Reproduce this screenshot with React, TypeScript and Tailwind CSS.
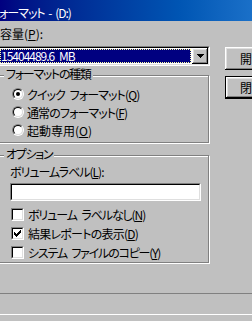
import { ReactNode } from 'react'

/* Win98 uslubidagi "Format" dialogi (chap tomoni kesilgan) */

const Key = ({ children }: { children: ReactNode }) => (
	<span className="underline underline-offset-[1px]">{children}</span>
)

const Radio = ({ checked }: { checked?: boolean }) => (
	<span className="block h-[12px] w-[12px] shrink-0 rounded-full border border-t-[#808080] border-l-[#808080] border-b-white border-r-white">
		<span className="flex h-full w-full items-center justify-center rounded-full border border-t-black border-l-black border-b-[#dfdfdf] border-r-[#dfdfdf] bg-white">
			{checked && <span className="block h-[4px] w-[4px] rounded-full bg-black" />}
		</span>
	</span>
)

const Check = ({ checked }: { checked?: boolean }) => (
	<span className="flex h-[13px] w-[13px] shrink-0 border border-t-[#808080] border-l-[#808080] border-b-white border-r-white">
		<span className="flex flex-1 items-center justify-center border border-t-black border-l-black border-b-[#dfdfdf] border-r-[#dfdfdf] bg-white">
			{checked && (
				<svg width="7" height="7" viewBox="0 0 7 7" shapeRendering="crispEdges">
					<path
						d="M0 2h1v3h-1z M1 3h1v3h-1z M2 4h1v3h-1z M3 3h1v3h-1z M4 2h1v3h-1z M5 1h1v3h-1z M6 0h1v3h-1z"
						fill="#000"
					/>
				</svg>
			)}
		</span>
	</span>
)

const Group = ({
	label,
	className,
	children,
}: {
	label: ReactNode
	className: string
	children: ReactNode
}) => (
	<div
		className={`relative w-[212px] border border-[#808080] shadow-[inset_1px_1px_0_#fff,1px_1px_0_#fff] ${className}`}
	>
		<span className="absolute left-[6px] top-[-9px] bg-[#c0c0c0] px-[2px] leading-[14px] tracking-[-1.3px]">
			{label}
		</span>
		{children}
	</div>
)

const raised =
	'shadow-[inset_-1px_-1px_0_#000,inset_1px_1px_0_#fff,inset_-2px_-2px_0_#808080,inset_2px_2px_0_#dfdfdf]'

export default function App() {
	return (
		<div className="h-[321px] w-[252px] overflow-hidden bg-[#c0c0c0] font-['Noto_Sans_CJK_JP','Noto_Sans_CJK_SC',sans-serif] text-[12px] leading-[15px] text-black [font-feature-settings:'palt'] [word-spacing:3px]">
			{/* Title */}
			<div className="h-[21px] overflow-hidden bg-gradient-to-r from-[#000080] to-[#1a70c8] pt-[6px] leading-[14px] whitespace-nowrap text-white">
				<span className="-ml-[10px] tracking-[-1px] [word-spacing:2px]">フォーマット - (D:)</span>
			</div>

			<div className="flex">
				{/* Left column */}
				<div className="-ml-[3px] flex w-[213px] shrink-0 flex-col pt-[5px]">
					<div className="pl-[3px]">
						容量(<Key>P</Key>):
					</div>

					{/* Combo */}
					<div className="mt-[5px] flex h-[20px] w-[213px] border border-t-[#808080] border-l-[#808080] border-b-white border-r-white">
						<div className="flex flex-1 border border-t-black border-l-black border-b-[#dfdfdf] border-r-[#dfdfdf] bg-white pl-[1px]">
							<div className="my-[1px] flex flex-1 items-center bg-[#000080] pl-[1px] leading-[14px] tracking-[-1px] text-white outline-1 -outline-offset-1 outline-dotted outline-[#ffffa0]">
								15404489.6 MB
							</div>
							<div className={`ml-[1px] flex h-[16px] w-[16px] items-center justify-center bg-[#c0c0c0] ${raised}`}>
								<svg width="7" height="4" viewBox="0 0 7 4" shapeRendering="crispEdges">
									<path d="M0 0h7L3.5 4z" fill="#000" />
								</svg>
							</div>
						</div>
					</div>

					<Group label="フォーマットの種類" className="mt-[9px] pl-[14px] pt-[9px] pb-[3px]">
						<div className="flex h-[18px] items-center gap-[3px]">
							<Radio checked />
							<span className="whitespace-nowrap tracking-[-0.9px]">
								クイック フォーマット(<Key>Q</Key>)
							</span>
						</div>
						<div className="flex h-[18px] items-center gap-[3px]">
							<Radio />
							<span className="whitespace-nowrap tracking-[-0.9px]">
								通常のフォーマット(<Key>F</Key>)
							</span>
						</div>
						<div className="flex h-[18px] items-center gap-[3px]">
							<Radio />
							<span className="whitespace-nowrap">
								起動専用(<Key>O</Key>)
							</span>
						</div>
					</Group>

					<Group label="オプション" className="mt-[12px] pl-[12px] pt-[9px]">
						<div className="leading-[14px] whitespace-nowrap tracking-[-1px]">
							ボリュームラベル(<Key>L</Key>):
						</div>
						<div className="mt-[4px] flex h-[18px] w-[191px] border border-t-[#808080] border-l-[#808080] border-b-white border-r-white">
							<div className="flex-1 border border-t-black border-l-black border-b-[#dfdfdf] border-r-[#dfdfdf] bg-white" />
						</div>
						<div className="mt-[4px] flex flex-col">
							<div className="flex h-[19px] items-center gap-[4px] pl-[1px]">
								<Check />
								<span className="whitespace-nowrap tracking-[-1.1px]">
									ボリューム ラベルなし(<Key>N</Key>)
								</span>
							</div>
							<div className="flex h-[19px] items-center gap-[4px] pl-[1px]">
								<Check checked />
								<span className="whitespace-nowrap tracking-[-0.75px]">
									結果レポートの表示(<Key>D</Key>)
								</span>
							</div>
							<div className="flex h-[19px] items-center gap-[4px] pl-[1px]">
								<Check />
								<span className="whitespace-nowrap tracking-[-1.2px]">
									システム ファイルのコピー(<Key>Y</Key>)
								</span>
							</div>
						</div>
					</Group>
				</div>

				{/* Buttons */}
				<div className="ml-[15px] flex shrink-0 flex-col gap-[6px] pt-[26px]">
					<div className={`flex h-[23px] w-[75px] items-center bg-[#c0c0c0] pl-[15px] whitespace-nowrap ${raised}`}>
						開始
					</div>
					<div className="h-[23px] w-[75px] border border-black">
						<div className={`flex h-full items-center bg-[#c0c0c0] pl-[14px] whitespace-nowrap ${raised}`}>
							閉じる
						</div>
					</div>
				</div>
			</div>

			{/* Bottom frame */}
			<div className="-mx-[4px] mt-[30px] h-[22px] border-t border-b border-t-[#808080] border-b-white" />
		</div>
	)
}
